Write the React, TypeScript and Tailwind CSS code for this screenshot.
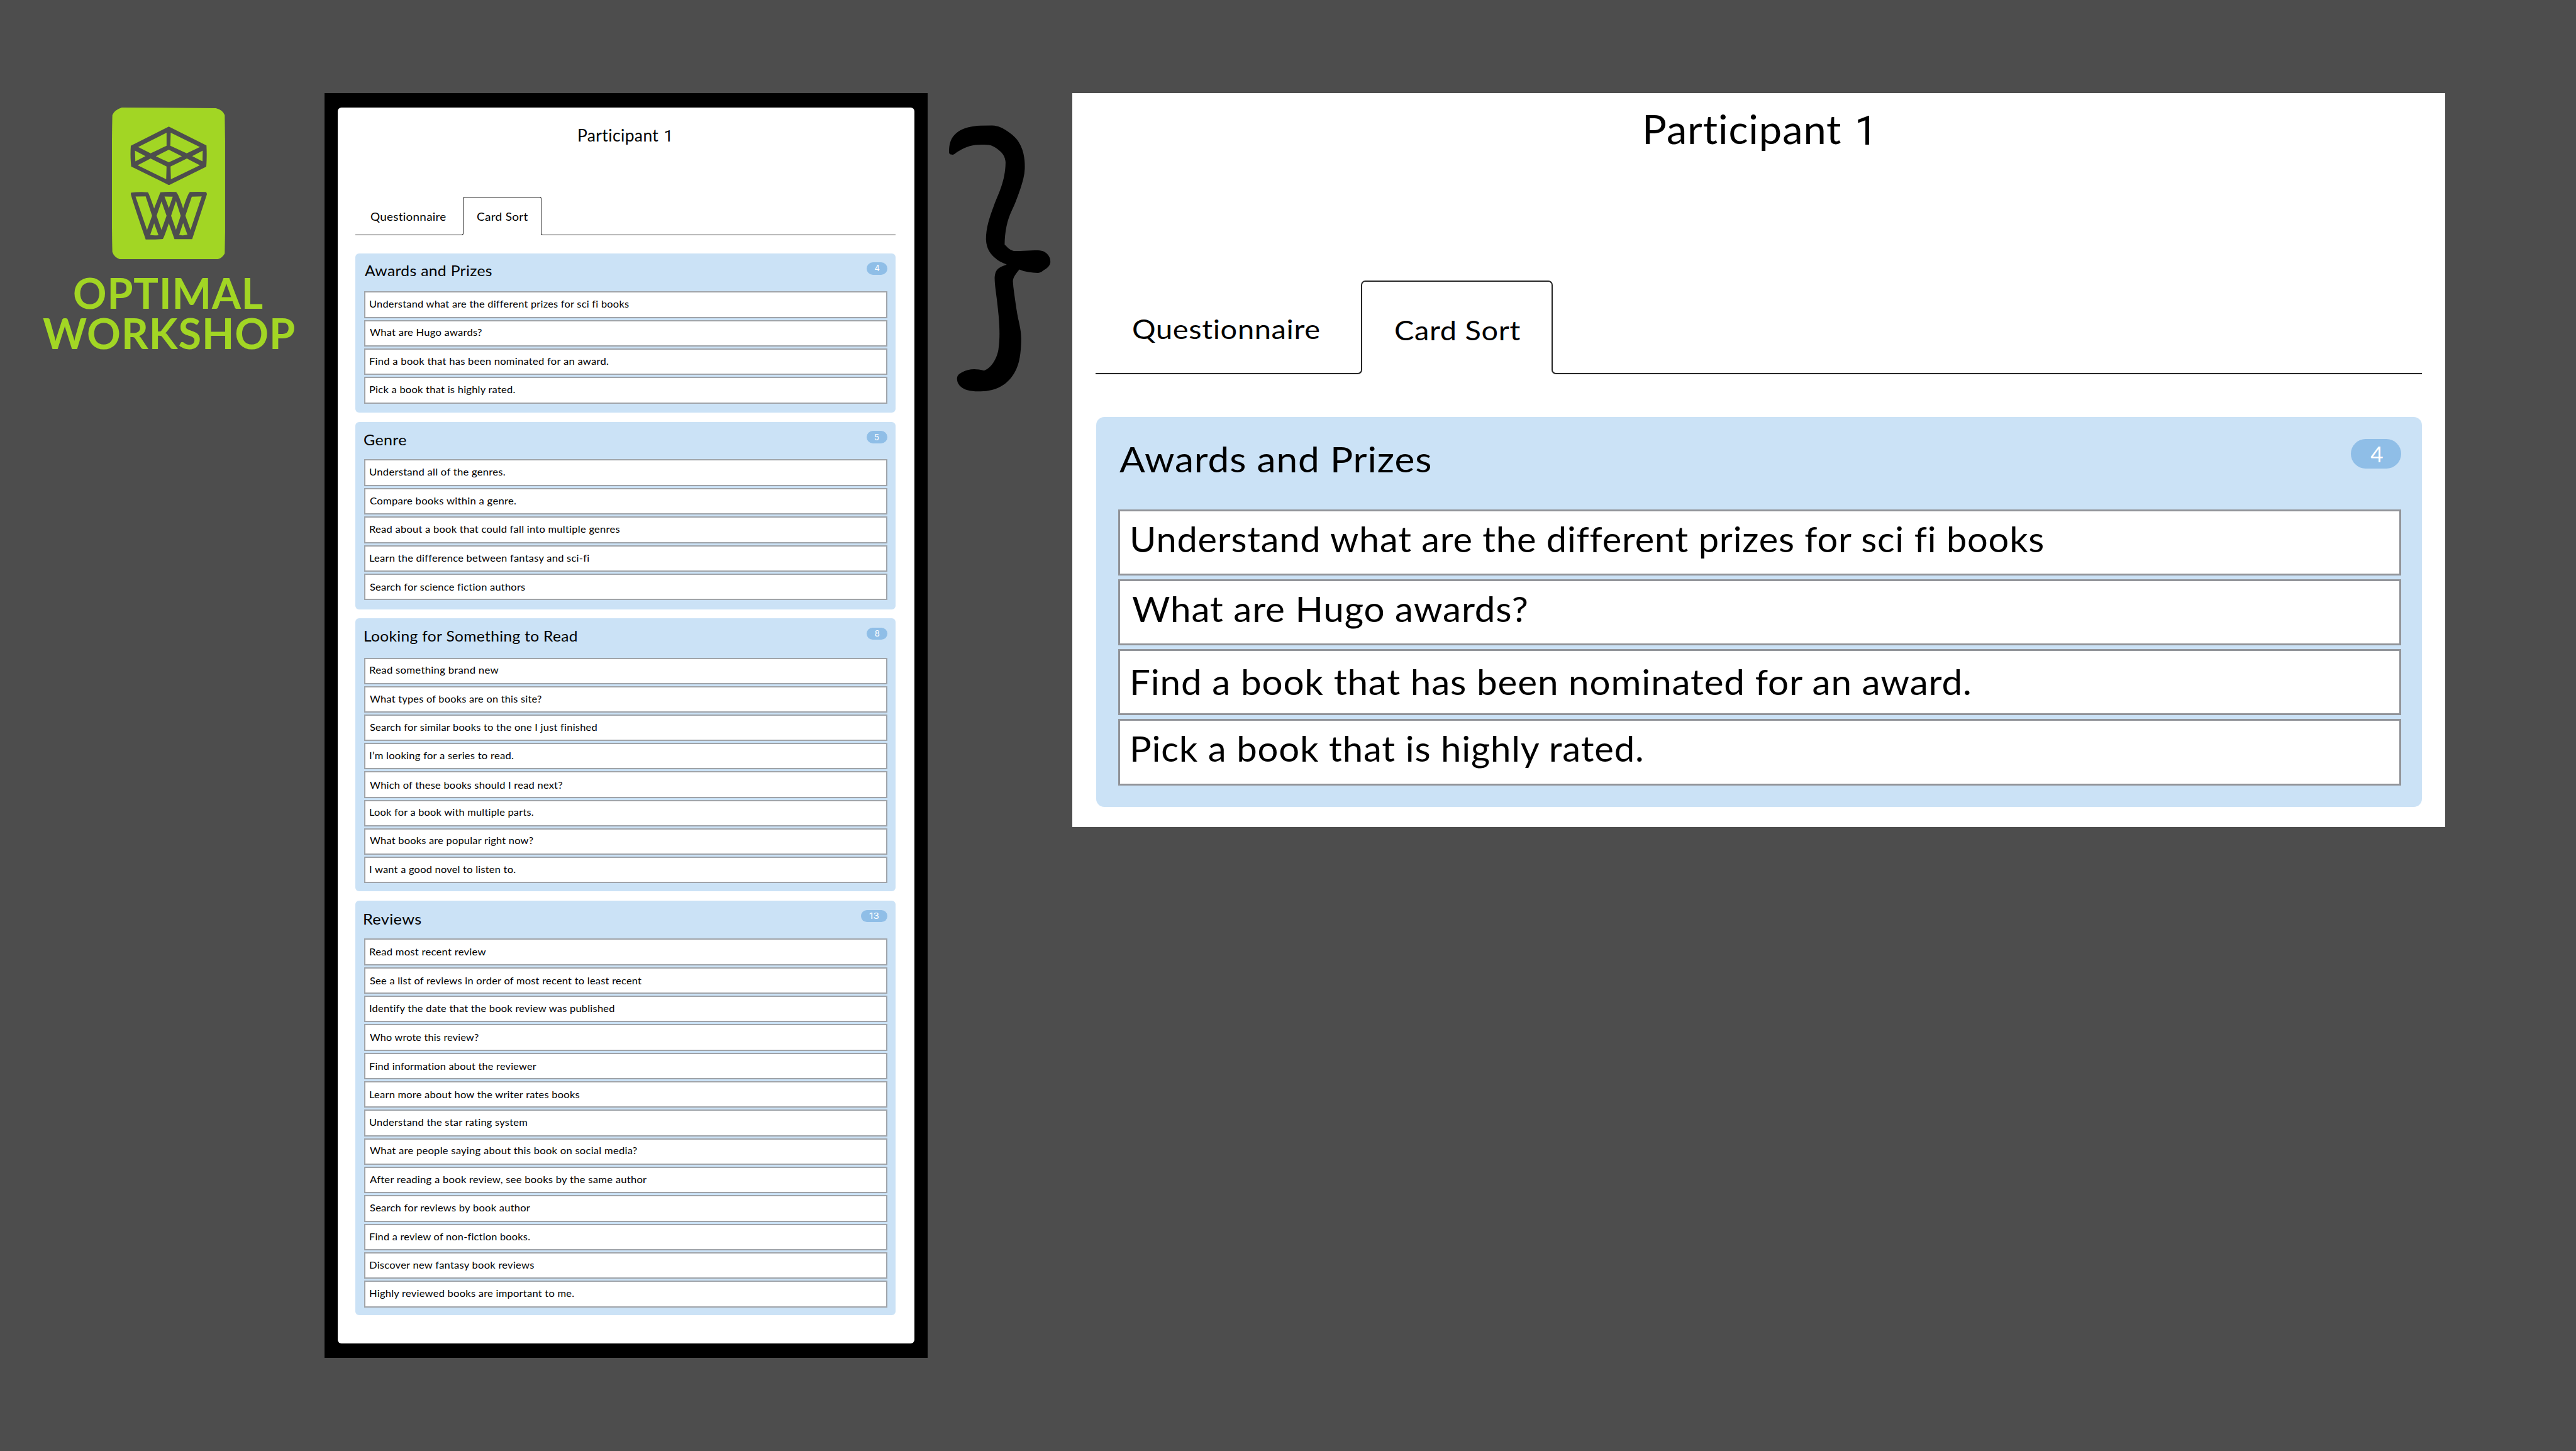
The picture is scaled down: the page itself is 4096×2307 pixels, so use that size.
import { useLayoutEffect, useRef, useState } from "react";

/* A single line of text, stretched so that its visible ink spans exactly `width` pixels. */
function Label({ text, width, className = "" }: { text: string; width: number; className?: string }) {
  const ref = useRef<HTMLSpanElement>(null);
  const [fit, setFit] = useState({ transform: "none", marginLeft: 0 });
  useLayoutEffect(() => {
    const el = ref.current;
    const ctx = document.createElement("canvas").getContext("2d");
    if (!el || !ctx) return;
    const cs = getComputedStyle(el);
    const tracking = parseFloat(cs.letterSpacing) || 0;
    const chars = Array.from(text);
    ctx.font = `${cs.fontWeight} ${cs.fontSize} ${cs.fontFamily}`;
    ctx.letterSpacing = "0.01px";
    const m = ctx.measureText(text);
    const ink = m.actualBoundingBoxLeft + m.actualBoundingBoxRight + tracking * (chars.length - 1);
    const scale = chars.length > 1 ? width / ink : 1;
    setFit({ transform: `scaleX(${scale})`, marginLeft: m.actualBoundingBoxLeft * scale });
  }, [text, width]);
  return (
    <span className={`block shrink-0 whitespace-nowrap leading-none ${className}`} style={{ width }}>
      <span ref={ref} className="block origin-left tracking-[0.014em]" style={fit}>
        {text}
      </span>
    </span>
  );
}

type Card = { t: string; w: number; y: number; x?: number };
type Group = {
  title: string;
  titleWidth: number;
  titleClass: string;
  count: string;
  countWidth: number;
  badgeClass: string;
  panelClass: string;
  headClass: string;
  cards: Card[];
};

const groups: Group[] = [
  {
    title: "Awards and Prizes",
    titleWidth: 201.7,
    titleClass: "ml-[15.5px] mt-[15.9px]",
    count: "4",
    countWidth: 8,
    badgeClass: "w-[33.4px] mt-[14.1px]",
    panelClass: "h-[252.6px] pb-[14.1px]",
    headClass: "h-[60.1px]",
    cards: [
      { t: "Understand what are the different prizes for sci fi books", w: 413.4, y: 9.3 },
      { t: "What are Hugo awards?", w: 178.6, y: 9, x: 7.1 },
      { t: "Find a book that has been nominated for an award.", w: 380, y: 10.3 },
      { t: "Pick a book that is highly rated.", w: 231.3, y: 9.2 },
    ],
  },
  {
    title: "Genre",
    titleWidth: 67.4,
    titleClass: "ml-[14.5px] mt-[17.4px]",
    count: "5",
    countWidth: 7,
    badgeClass: "w-[33.4px] mt-[14.4px]",
    panelClass: "mt-[15.2px] h-[298.5px] pb-[15px]",
    headClass: "h-[59.3px]",
    cards: [
      { t: "Understand all of the genres.", w: 215.5, y: 10.2 },
      { t: "Compare books within a genre.", w: 232.8, y: 10.1 },
      { t: "Read about a book that could fall into multiple genres", w: 398.2, y: 10.2 },
      { t: "Learn the difference between fantasy and sci-fi", w: 349.1, y: 10 },
      { t: "Search for science fiction authors", w: 248, y: 11 },
    ],
  },
  {
    title: "Looking for Something to Read",
    titleWidth: 338.4,
    titleClass: "ml-[15px] mt-[16.9px]",
    count: "8",
    countWidth: 7.5,
    badgeClass: "w-[33.4px] mt-[14.4px]",
    panelClass: "mt-[13.9px] h-[434.1px] pb-[13.4px]",
    headClass: "h-[62.4px]",
    cards: [
      { t: "Read something brand new", w: 205.4, y: 9.7 },
      { t: "What types of books are on this site?", w: 273.8, y: 9.9, x: 7.1 },
      { t: "Search for similar books to the one I just finished", w: 362, y: 10.1 },
      { t: "I’m looking for a series to read.", w: 228.7, y: 9.8 },
      { t: "Which of these books should I read next?", w: 307.2, y: 11.1, x: 7.1 },
      { t: "Look for a book with multiple parts.", w: 260.9, y: 9.7 },
      { t: "What books are popular right now?", w: 260.6, y: 9.5, x: 7.1 },
      { t: "I want a good novel to listen to.", w: 231.9, y: 9.7 },
    ],
  },
  {
    title: "Reviews",
    titleWidth: 90.1,
    titleClass: "ml-[14.5px] mt-[17.2px]",
    count: "13",
    countWidth: 15.8,
    badgeClass: "w-[42px] mt-[14.6px]",
    panelClass: "mt-[15px] h-[658.9px] pb-[12.6px]",
    headClass: "h-[60px]",
    cards: [
      { t: "Read most recent review", w: 185.3, y: 10.6 },
      { t: "See a list of reviews in order of most recent to least recent", w: 433.9, y: 10.9 },
      { t: "Identify the date that the book review was published", w: 390.1, y: 9.7 },
      { t: "Who wrote this review?", w: 173.6, y: 10.7, x: 7.1 },
      { t: "Find information about the reviewer", w: 265.3, y: 10.8 },
      { t: "Learn more about how the writer rates books", w: 335.2, y: 10.8 },
      { t: "Understand the star rating system", w: 251.4, y: 9.4 },
      { t: "What are people saying about this book on social media?", w: 425.7, y: 9.4, x: 7.1 },
      { t: "After reading a book review, see books by the same author", w: 441.7, y: 9.5, x: 7.1 },
      { t: "Search for reviews by book author", w: 256.2, y: 9.5 },
      { t: "Find a review of non-fiction books.", w: 255.2, y: 10.5 },
      { t: "Discover new fantasy book reviews", w: 262.8, y: 9.6 },
      { t: "Highly reviewed books are important to me.", w: 325.2, y: 9.1 },
    ],
  },
];

const featured: Card[] = [
  { t: "Understand what are the different prizes for sci fi books", w: 1451.9, y: 16.1, x: 19.3 },
  { t: "What are Hugo awards?", w: 628, y: 15.7, x: 19.3 },
  { t: "Find a book that has been nominated for an award.", w: 1333, y: 21.4, x: 20 },
  { t: "Pick a book that is highly rated.", w: 812, y: 15.7, x: 20 },
];

function GroupPanel({ g }: { g: Group }) {
  return (
    <section className={`flex flex-col rounded-[6px] bg-[#cbe2f6] pl-[14.3px] pr-[12.8px] ${g.panelClass}`}>
      <header className={`-ml-[14.3px] flex shrink-0 items-start justify-between ${g.headClass}`}>
        <Label text={g.title} width={g.titleWidth} className={`text-[22.8px] ${g.titleClass}`} />
        <span
          className={`flex h-[19.4px] items-center justify-center rounded-full bg-[#8fbee7] text-white ${g.badgeClass}`}
        >
          <Label text={g.count} width={g.countWidth} className="font-['Inter'] text-[13px]" />
        </span>
      </header>
      <ul className="grid flex-1 auto-rows-fr gap-[3px]">
        {g.cards.map((c) => (
          <li
            key={c.t}
            className="flex min-h-0 items-start border-2 border-[#a0a4a9] bg-white text-[15.9px]"
            style={{ paddingTop: c.y, paddingLeft: c.x ?? 6.8 }}
          >
            <Label text={c.t} width={c.w} />
          </li>
        ))}
      </ul>
    </section>
  );
}

function Logo() {
  return (
    <svg className="h-[241.8px] w-[180px]" viewBox="443 120 601 808">
      <path
        fill="#a2d624"
        d="M495 120 L995 123 Q1032 132 1042 160 L1044 300 V780 L1042 895 Q1030 918 1006 925 Q745 930 483 925 Q455 916 445 888 Q442 800 442 520 Q442 250 445 160 Q455 133 495 120Z"
      />
      <path
        fill="#4d4d4d"
        fillRule="evenodd"
        d="M745 221 L945 321 Q948 378 944 434 L750 530 Q745 532 740 529 L545 433 Q539 378 543 323Z
           M733 254 L582 330 L648 363 L733 323Z M755 254 L753 323 L840 363 L910 330Z
           M565 349 L567 406 L621 378Z M925 349 L869 378 L924 406Z
           M745 344 L676 379 L745 411 L814 379Z
           M648 391 L579 427 L731 501 L733 433Z M841 391 L754 433 L756 501 L910 427Z"
      />
      <path
        fill="#4d4d4d"
        fillRule="evenodd"
        d="M545 572 Q590 566 634 570 Q640 578 667 656 L700 570 Q745 566 783 569 Q794 574 821 656 Q846 577 857 569 Q900 566 942 569 Q948 574 947 582 L869 819 H775 L745 735 Q718 815 713 818 Q670 822 622 821 Q543 590 543 578Z
           M568 593 L629 771 L656 695 L622 592Z M722 593 L745 655 L766 594Z
           M706 619 L680 695 L706 770 L733 695Z M783 616 L757 695 L783 770 L808 695Z
           M867 594 L833 695 L860 771 L920 592Z
           M667 735 L646 797 Q668 801 690 798Z M821 733 L800 797 Q822 801 844 796Z"
      />
    </svg>
  );
}

function Brace() {
  return (
    <svg
      className="ml-[32.5px] mt-[197.3px] h-[426.9px] w-[164.7px] shrink-0"
      viewBox="115 115 550 1380"
      preserveAspectRatio="none"
    >
      <path d="M122 262 C121 225 128 195 150 172 C180 140 225 127 290 124 L350 123 C385 124 410 138 430 151 C470 176 490 200 503 228 C522 268 525 310 524 345 C523 380 512 415 500 450 C480 505 470 530 455 560 C430 610 418 670 417 735 C430 748 445 764 465 768 L500 768 L575 765 C610 764 630 768 645 786 C658 800 660 812 660 826 C657 845 645 855 625 867 C612 877 605 881 595 881 C560 880 525 875 495 863 C475 887 461 905 461 925 C463 960 470 1000 476 1042 C490 1140 505 1160 505 1225 C504 1290 497 1350 470 1393 C430 1460 370 1488 290 1490 C250 1490 215 1487 190 1470 C172 1457 165 1444 164 1424 C165 1405 175 1401 190 1392 C225 1374 260 1371 308 1383 C345 1370 375 1325 384 1275 C392 1220 391 1170 385 1100 C375 990 365 960 364 905 C366 880 372 865 388 855 C405 845 415 842 428 838 C400 827 385 820 370 807 C345 787 320 760 318 708 C318 650 335 600 360 535 C385 472 420 410 422 315 C421 290 412 275 398 260 C380 244 362 232 345 226 C330 222 315 222 295 222 C240 223 205 232 150 270 C142 276 122 273 122 262Z" />
    </svg>
  );
}

export default function App() {
  return (
    <main className="flex h-[2307px] w-[4096px] items-start overflow-hidden bg-[#4d4d4d] font-['Lato',sans-serif] text-black">
      <aside className="ml-[67.4px] flex w-[401px] shrink-0 flex-col items-center pt-[170.7px] font-bold text-[#a2d624]">
        <Logo />
        <Label text="OPTIMAL" width={300} className="mt-[20.5px] text-[66px]" />
        <Label text="WORKSHOP" width={400.6} className="-mt-[2px] text-[66px]" />
      </aside>

      <div className="ml-[47.6px] mt-[148px] h-[2011px] w-[959px] shrink-0 bg-black px-[21px] py-[23px]">
        <div className="flex h-full flex-col rounded-[6px] bg-white pl-[28px] pr-[30px]">
          <h1 className="ml-[355.4px] flex h-[142px] items-start pt-[30.6px] text-[26.3px]">
            <Label text="Participant" width={127.5} />
            <Label text="1" width={9} className="ml-[9.5px] mt-[1.2px] font-['Roboto']" />
          </h1>
          <nav className="flex h-[61px] w-[859px] shrink-0 items-end text-[17.2px]">
            <div className="flex h-[56px] w-[172.5px] items-start rounded-br-[3px] border-b border-r border-neutral-800 pl-[23.7px] pt-[17.5px]">
              <Label text="Questionnaire" width={120.4} />
            </div>
            <div className="-ml-px flex h-[57px] w-[125px] items-start self-start rounded-t-[3px] border-x border-t border-neutral-800 pl-[20.4px] pt-[22px]">
              <Label text="Card Sort" width={81.3} />
            </div>
            <div className="-ml-px h-[56px] flex-1 rounded-bl-[3px] border-b border-l border-neutral-800" />
          </nav>
          <div className="mt-[29.2px] flex flex-col">
            {groups.map((g) => (
              <GroupPanel key={g.title} g={g} />
            ))}
          </div>
        </div>
      </div>

      <Brace />

      <div className="ml-[33px] mt-[148px] h-[1167px] w-[2183px] shrink-0 bg-white pl-[37px] pr-[37px]">
        <h1 className="ml-[873.4px] flex h-[298.4px] items-start pt-[25px] text-[64.3px]">
          <Label text="Participant" width={311.4} />
          <Label text="1" width={17.1} className="ml-[27px] mt-[2.9px] font-['Roboto']" />
        </h1>
        <nav className="flex h-[149px] w-[2109px] items-end text-[42px]">
          <div className="flex h-[138px] w-[424.3px] items-start rounded-br-[7px] border-b-2 border-r-2 border-neutral-800 pl-[59.9px] pt-[45px]">
            <Label text="Questionnaire" width={295.7} />
          </div>
          <div className="-ml-[2px] flex h-[140px] w-[305px] items-start self-start rounded-t-[7px] border-x-2 border-t-2 border-neutral-800 pl-[52.6px] pt-[55.7px]">
            <Label text="Card Sort" width={198} />
          </div>
          <div className="-ml-[2px] h-[138px] flex-1 rounded-bl-[7px] border-b-2 border-l-2 border-neutral-800" />
        </nav>
        <section className="ml-[1px] mt-[67.7px] flex h-[619.6px] w-[2108px] flex-col rounded-[13px] bg-[#cbe2f6] pb-[34px] pl-[34.7px] pr-[32.7px]">
          <header className="flex h-[146.6px] shrink-0 items-start justify-between">
            <Label text="Awards and Prizes" width={495.2} className="ml-[2.5px] mt-[38.8px] text-[55.9px]" />
            <span className="mt-[34.8px] flex h-[47.4px] w-[80.5px] items-center justify-center rounded-full bg-[#8fbee7] text-white">
              <Label text="4" width={18} className="text-[35px]" />
            </span>
          </header>
          <ul className="grid flex-1 auto-rows-fr gap-[5.8px]">
            {featured.map((c) => (
              <li
                key={c.t}
                className="flex min-h-0 items-start border-3 border-[#929499] bg-white text-[55.9px]"
                style={{ paddingTop: c.y, paddingLeft: c.x }}
              >
                <Label text={c.t} width={c.w} />
              </li>
            ))}
          </ul>
        </section>
      </div>
    </main>
  );
}
